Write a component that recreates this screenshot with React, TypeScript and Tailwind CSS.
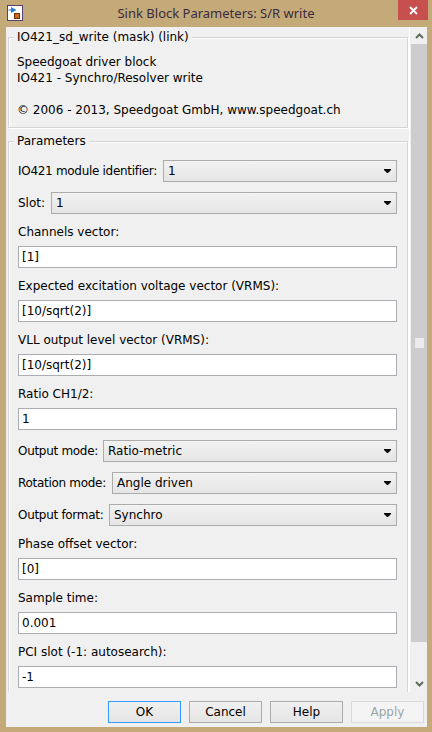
import React from "react";

const Arrow = () => (
  <svg width="7" height="4" viewBox="0 0 7 4">
    <path d="M0 0H7V1L4 4H3L0 1Z" fill="#000" />
  </svg>
);

function Combo({ label, labelW, value, first }: { label: string; labelW: string; value: string; first?: boolean }) {
  return (
    <div className={first ? "flex h-[22px] items-center" : "mt-[10px] flex h-[22px] items-center"}>
      <div className={labelW + " shrink-0 whitespace-nowrap"}>{label}</div>
      <div className="flex h-[22px] flex-1 items-center justify-between border border-[#acacac] bg-gradient-to-b from-[#f2f2f2] to-[#e5e5e5] pl-[4px] pr-[5px]">
        <span className="leading-[20px]">{value}</span>
        <Arrow />
      </div>
    </div>
  );
}

function Field({ label, value }: { label: string; value: string }) {
  return (
    <div className="mt-[10px]">
      <div className="h-[16px] whitespace-nowrap leading-[16px]">{label}</div>
      <div className="mt-[6px] h-[22px] border border-[#abadb3] bg-white pl-[3px] leading-[20px]">{value}</div>
    </div>
  );
}

function Btn({ children, kind }: { children: React.ReactNode; kind?: "default" | "disabled" }) {
  const cls =
    kind === "default"
      ? "border-[#3399ff] bg-gradient-to-b from-[#f0f0f0] to-[#e5e5e5] text-black"
      : kind === "disabled"
      ? "border-[#d9d9d9] bg-[#f4f4f4] text-[#98a6a6]"
      : "border-[#acacac] bg-gradient-to-b from-[#f0f0f0] to-[#e5e5e5] text-black";
  return (
    <div className={"flex h-[22px] w-[73px] items-center justify-center border leading-[20px] " + cls}>{children}</div>
  );
}

export default function App() {
  return (
    <div className="flex h-[732px] w-[432px] flex-col overflow-hidden bg-[#c4aa78] font-['DejaVu_Sans',sans-serif] text-[12px] leading-[16px] text-black">
      {/* Title bar */}
      <div className="flex h-[27px] shrink-0 items-start">
        <div className="w-[40px] shrink-0 pl-[7px] pt-[5px]">
          <svg width="16" height="16" viewBox="0 0 16 16">
            <rect x="0.5" y="0.5" width="15" height="15" fill="#fff" stroke="#5b3f73" />
            <path d="M1.5 5H4.5" stroke="#2b78d4" strokeWidth="1" />
            <path d="M4 2L9.5 5L4 8Z" fill="#2b78d4" />
            <rect x="7.5" y="8.5" width="5" height="5" fill="#d0661c" stroke="#6d2f0a" />
          </svg>
        </div>
        <div className="flex-1 text-center font-['Noto_Sans',sans-serif] text-[13px] leading-[27px] text-[#3b2a3f]">
          Sink Block Parameters: S/R write
        </div>
        <div className="flex w-[40px] shrink-0 justify-end pr-[4px]">
          <div className="flex h-[20px] w-[30px] items-center justify-center bg-[#c7504f]">
            <svg width="9" height="9" viewBox="0 0 9 9">
              <path d="M1 1L8 8M8 1L1 8" stroke="#fff" strokeWidth="1.8" />
            </svg>
          </div>
        </div>
      </div>

      {/* Client */}
      <div className="flex flex-1 flex-col pb-[5px] pl-[6px] pr-[5px]">
        <div className="flex flex-1 flex-col bg-[#f0f0f0]">
          <div className="flex h-[665px] shrink-0">
            {/* Scrollable content */}
            <div className="flex-1 overflow-hidden pt-[10px]">
              {/* Group 1 */}
              <div className="relative ml-[2px] w-[400px] border border-[#d5d5d5] pb-[9px] pl-[8px] pt-[16px] shadow-[inset_1px_1px_0_#fff,1px_1px_0_#fff]">
                <span className="absolute left-[5px] top-[-9px] bg-[#f0f0f0] px-[3px] leading-[16px]">
                  IO421_sd_write (mask) (link)
                </span>
                <div>Speedgoat driver block</div>
                <div>IO421 - Synchro/Resolver write</div>
                <div className="h-[16px]" />
                <div>© 2006 - 2013, Speedgoat GmbH, www.speedgoat.ch</div>
              </div>

              {/* Group 2 */}
              <div className="relative ml-[2px] mt-[13px] w-[400px] border border-[#d5d5d5] pb-[14px] pl-[9px] pr-[10px] pt-[18px] shadow-[inset_1px_1px_0_#fff,1px_1px_0_#fff]">
                <span className="absolute left-[5px] top-[-9px] bg-[#f0f0f0] px-[3px] leading-[16px]">Parameters</span>
                <Combo first label="IO421 module identifier:" labelW="w-[145px] tracking-[-0.3px]" value="1" />
                <Combo label="Slot:" labelW="w-[33px]" value="1" />
                <Field label="Channels vector:" value="[1]" />
                <Field label="Expected excitation voltage vector (VRMS):" value="[10/sqrt(2)]" />
                <Field label="VLL output level vector (VRMS):" value="[10/sqrt(2)]" />
                <Field label="Ratio CH1/2:" value="1" />
                <Combo label="Output mode:" labelW="w-[85px] tracking-[-0.3px]" value="Ratio-metric" />
                <Combo label="Rotation mode:" labelW="w-[94px] tracking-[-0.3px]" value="Angle driven" />
                <Combo label="Output format:" labelW="w-[91px] tracking-[-0.3px]" value="Synchro" />
                <Field label="Phase offset vector:" value="[0]" />
                <Field label="Sample time:" value="0.001" />
                <Field label="PCI slot (-1: autosearch):" value="-1" />
              </div>
            </div>

            {/* Scrollbar */}
            <div className="flex w-[18px] shrink-0 flex-col border-l border-white pl-[1px]">
              <div className="flex h-[17px] items-center justify-center">
                <svg width="9" height="6" viewBox="0 0 9 6">
                  <path d="M1 5L4.5 1.5L8 5" fill="none" stroke="#5f6f5f" strokeWidth="2" />
                </svg>
              </div>
              <div className="flex h-[598px] items-center justify-center bg-[#cdcdcd]">
                <div className="h-[10px] w-[9px] bg-[#ebebeb]" />
              </div>
              <div className="flex-1" />
              <div className="flex h-[17px] items-center justify-center">
                <svg width="9" height="6" viewBox="0 0 9 6">
                  <path d="M1 1L4.5 4.5L8 1" fill="none" stroke="#5f6f5f" strokeWidth="2" />
                </svg>
              </div>
            </div>
          </div>

          {/* Buttons */}
          <div className="flex h-[35px] shrink-0 justify-end gap-[8px] pr-[3px] pt-[9px]">
            <Btn kind="default">OK</Btn>
            <Btn>Cancel</Btn>
            <Btn>Help</Btn>
            <Btn kind="disabled">Apply</Btn>
          </div>
        </div>
      </div>
    </div>
  );
}
